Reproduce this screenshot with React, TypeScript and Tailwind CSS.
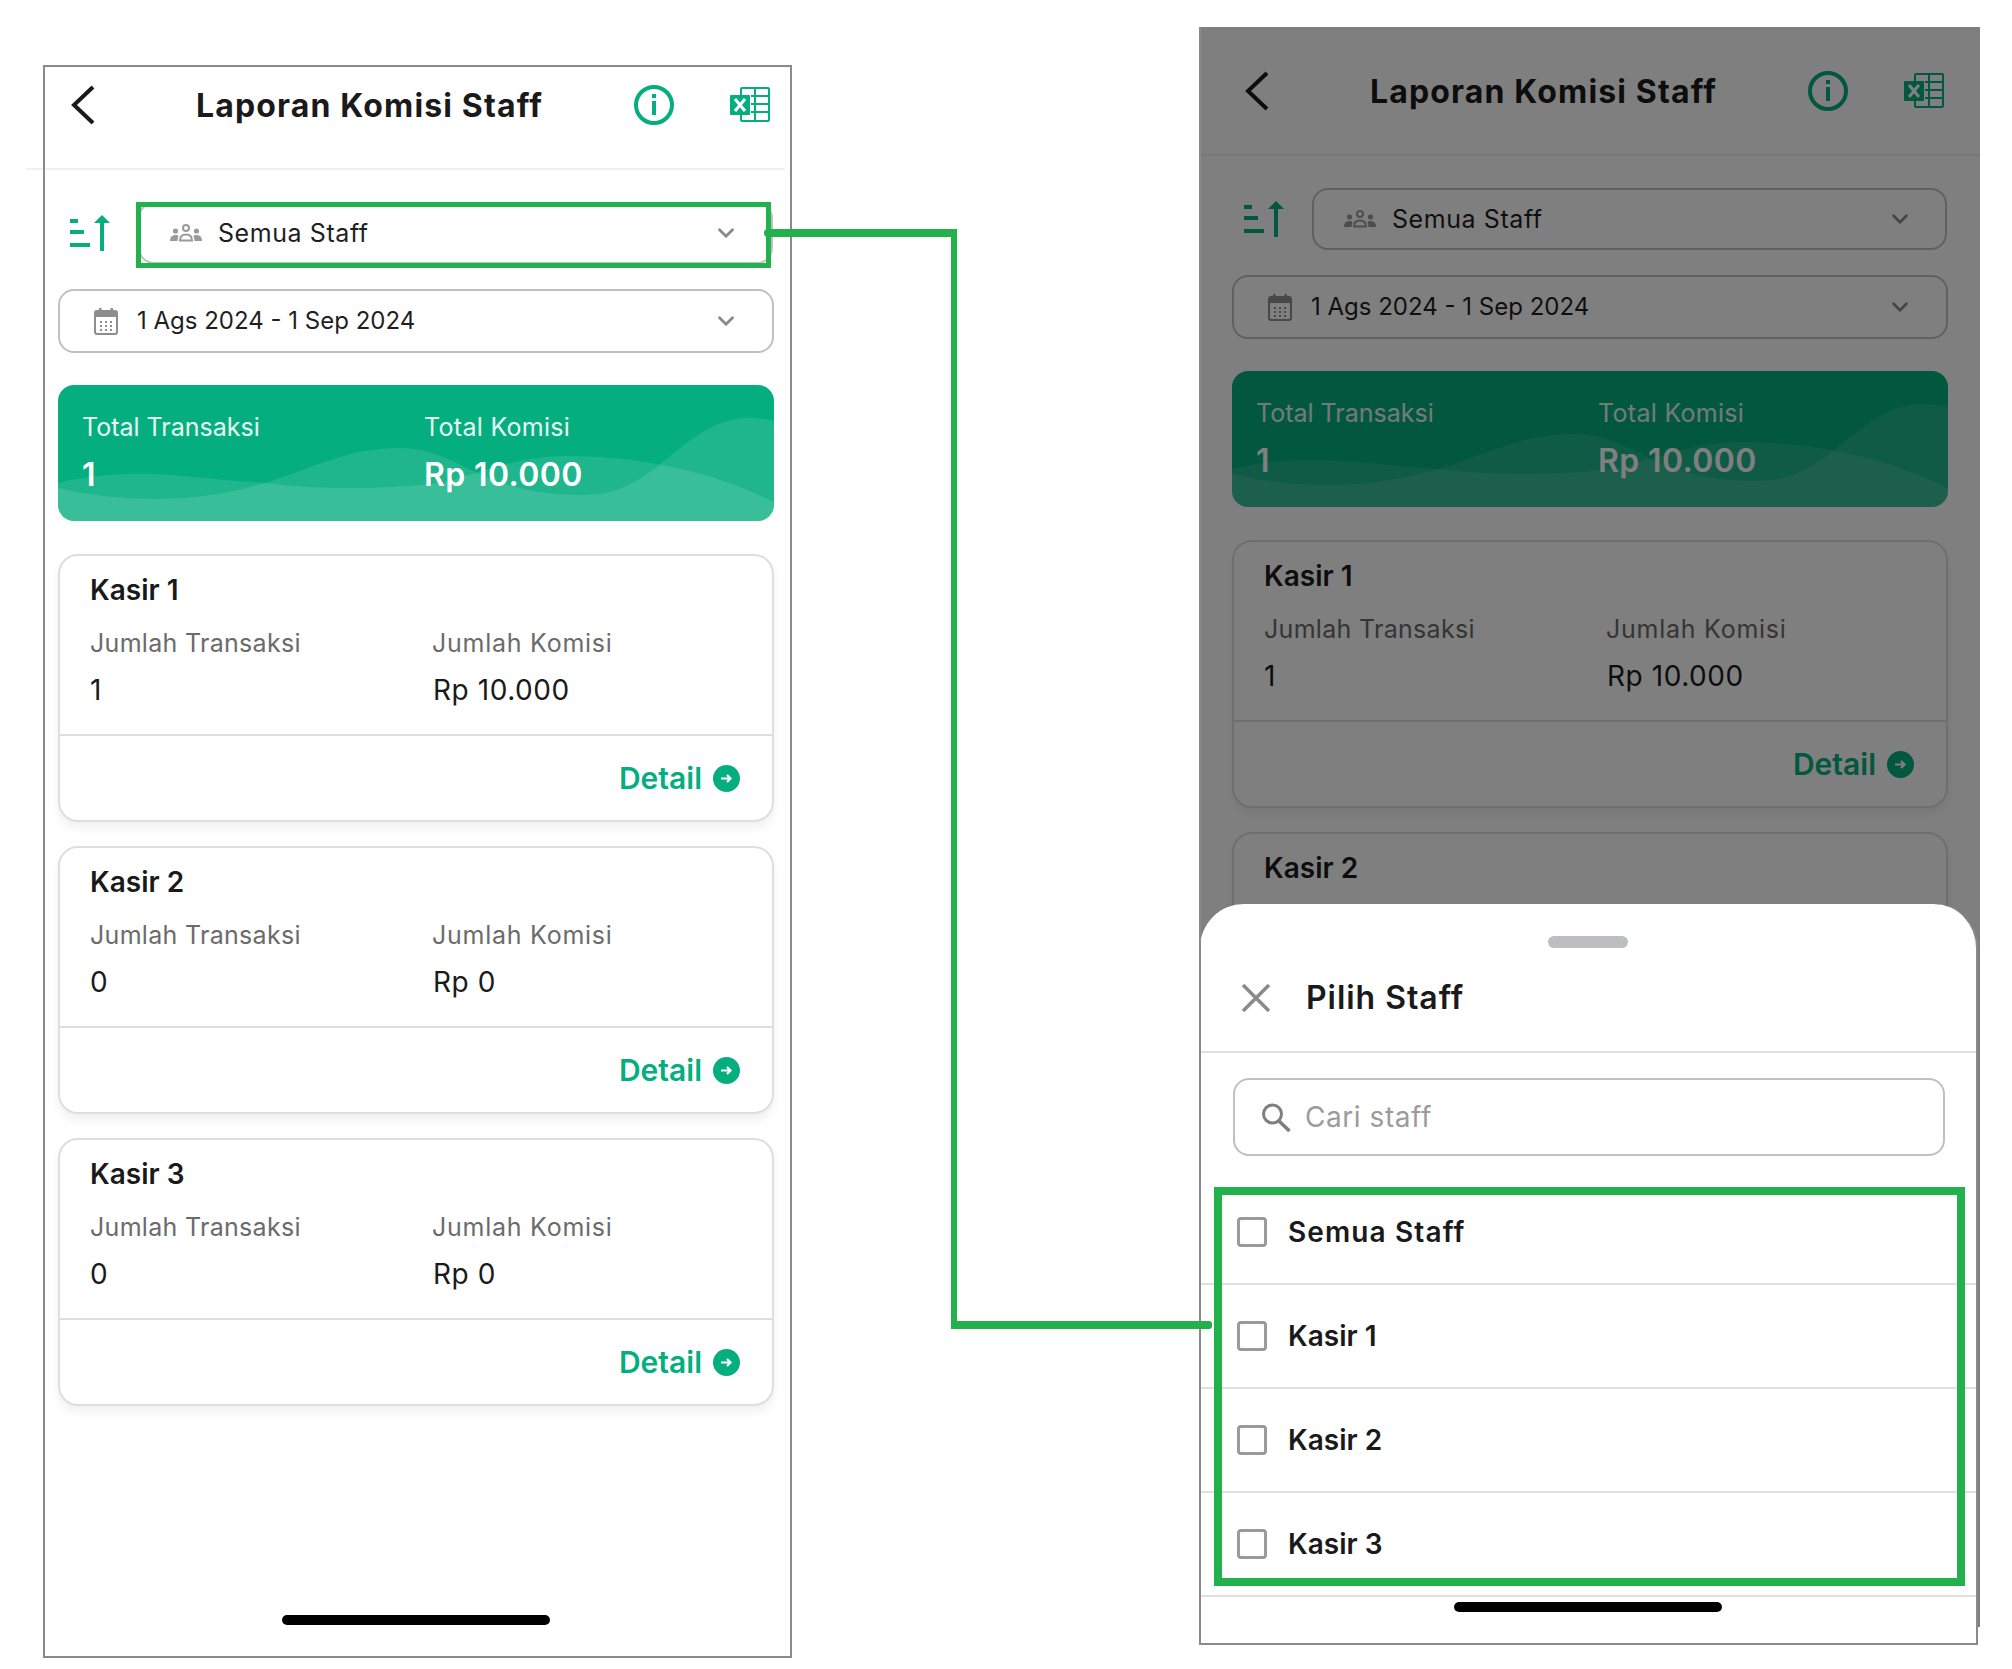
import { ChevronDown } from "lucide-react";

const GREEN = "#05ae7f";

const SortIcon = () => (
  <svg width="40" height="36" viewBox="0 0 40 36" fill="none">
    <rect x="0" y="4" width="8" height="4" fill={GREEN} />
    <rect x="0" y="15" width="14" height="4" fill={GREEN} />
    <rect x="0" y="28" width="20" height="4" fill={GREEN} />
    <path d="M32 0 L40 8 L24 8 Z" fill={GREEN} />
    <rect x="30" y="7" width="4" height="29" fill={GREEN} />
  </svg>
);

const InfoIcon = () => (
  <svg width="40" height="40" viewBox="0 0 40 40" fill="none">
    <circle cx="20" cy="20" r="18" stroke={GREEN} strokeWidth="4" />
    <rect x="18" y="9" width="4" height="4" fill={GREEN} />
    <rect x="18" y="16" width="4" height="14" fill={GREEN} />
  </svg>
);

const ExcelIcon = () => (
  <svg width="40" height="35" viewBox="0 0 40 35" fill="none">
    <rect x="11" y="1" width="28" height="33" rx="1" stroke={GREEN} strokeWidth="2" />
    <path d="M25 1V34M21 9H39M21 17H39M21 25H39" stroke={GREEN} strokeWidth="2" />
    <rect x="0" y="8" width="20" height="20" rx="1" fill={GREEN} />
    <path d="M5 12L15 24M15 12L5 24" stroke="#fff" strokeWidth="3" />
  </svg>
);

const BackIcon = () => (
  <svg width="24" height="40" viewBox="0 0 24 40" fill="none">
    <path d="M22 2L3 20L22 38" stroke="#1a1a1a" strokeWidth="4" />
  </svg>
);

const PeopleIcon = () => (
  <svg width="32" height="18" viewBox="0 0 32 18" fill="#9a9a9a">
    <circle cx="16" cy="4" r="3" fill="none" stroke="#9a9a9a" strokeWidth="2" />
    <circle cx="5.5" cy="7" r="2.6" />
    <circle cx="26.5" cy="7" r="2.6" />
    <path d="M0 17C0 13 2 11 6 11C7 11 8 11.4 8.5 12C8 13.5 7.6 15 7.6 17Z" />
    <path d="M32 17C32 13 30 11 26 11C25 11 24 11.4 23.5 12C24 13.5 24.4 15 24.4 17Z" />
    <path d="M10 16.5C10 12.5 12 10.5 16 10.5C20 10.5 22 12.5 22 16.5Z" fill="none" stroke="#9a9a9a" strokeWidth="2" />
  </svg>
);

const CalendarIcon = () => (
  <svg width="24" height="27" viewBox="0 0 24 27" fill="none">
    <rect x="1" y="3" width="22" height="23" rx="2" stroke="#8e8e8e" strokeWidth="2" />
    <rect x="1" y="3" width="22" height="6" fill="#8e8e8e" />
    <rect x="5" y="0" width="2.5" height="5" fill="#8e8e8e" />
    <rect x="16.5" y="0" width="2.5" height="5" fill="#8e8e8e" />
    <path d="M6 14H8M11 14H13M16 14H18M6 18H8M11 18H13M16 18H18M6 22H8M11 22H13M16 22H18" stroke="#8e8e8e" strokeWidth="2" />
  </svg>
);

const CloseIcon = () => (
  <svg width="30" height="30" viewBox="0 0 30 30" fill="none">
    <path d="M2 2L28 28M28 2L2 28" stroke="#8a8a8a" strokeWidth="3.5" />
  </svg>
);

const SearchIcon = () => (
  <svg width="30" height="29" viewBox="0 0 30 29" fill="none">
    <circle cx="11.5" cy="11" r="9" stroke="#7f7f7f" strokeWidth="3" />
    <path d="M18 18L28.5 28" stroke="#7f7f7f" strokeWidth="3.6" />
  </svg>
);

const DetailArrow = () => (
  <span className="flex h-[27px] w-[27px] items-center justify-center rounded-full bg-[#05ae7f]">
    <svg width="13" height="13" viewBox="0 0 13 13" fill="none">
      <path d="M1 6.5H10M7 3L10.5 6.5L7 10" stroke="#fff" strokeWidth="2.2" />
    </svg>
  </span>
);

const Wave = () => (
  <svg className="absolute inset-0 h-full w-full" viewBox="0 0 716 136" preserveAspectRatio="none">
    <path
      d="M0 98C28 91 55 89 82 89C125 89 165 96 207 98C238 102 265 103 293 103C325 103 358 101 389 97C425 86 465 71 508 71C575 71 650 84 716 117V136H0Z"
      fill="#fff"
      fillOpacity="0.11"
    />
    <path
      d="M0 103C32 110 62 114 97 114C140 114 175 107 207 98C255 83 290 63 341 63C372 63 392 75 413 85C445 101 480 110 523 110C555 110 575 100 599 82C628 58 655 33 690 33C700 33 708 34 716 36V136H0Z"
      fill="#fff"
      fillOpacity="0.11"
    />
  </svg>
);

const StaffCard = ({ name, count, amount, covered }: { name: string; count: string; amount: string; covered?: boolean }) => (
  <div className="h-[268px] w-[716px] rounded-[20px] border-2 border-[#dedede] bg-white shadow-[0_6px_10px_rgba(0,0,0,0.06)]">
    <div className="h-[180px] border-b-2 border-[#dedede] pl-[30px] pt-[16px]">
      <div className="h-[36px] text-[28px] leading-[36px] font-semibold text-[#1a1a1a]">{name}</div>
      {!covered && (
        <>
          <div className="mt-[20px] flex h-[30px] text-[25px] leading-[30px] text-[#6b6b6b]">
            <span className="w-[342px] tracking-[0.012em]">Jumlah Transaksi</span>
            <span className="tracking-[0.03em]">Jumlah Komisi</span>
          </div>
          <div className="mt-[16px] flex h-[32px] text-[28px] leading-[32px] tracking-[0.02em] text-[#1a1a1a]">
            <span className="w-[343px]">{count}</span>
            <span>{amount}</span>
          </div>
        </>
      )}
    </div>
    {!covered && (
      <div className="flex h-[84px] items-center justify-end gap-[11px] pr-[32px]">
        <span className="text-[30px] font-semibold text-[#05ae7f]">Detail</span>
        <DetailArrow />
      </div>
    )}
  </div>
);

const Screen = ({ dimmed }: { dimmed?: boolean }) => (
  <div className="relative w-[759px]">
    <header className="flex h-[129px] items-center border-b-2 border-[#f0f0f0] pl-[45px] pr-[15px]">
      <BackIcon />
      <h1 className="ml-[101px] pt-[2px] text-[32px] font-bold tracking-[0.036em] text-[#1a1a1a]">Laporan Komisi Staff</h1>
      <div className="ml-auto flex items-center gap-[56px]">
        <InfoIcon />
        <ExcelIcon />
      </div>
    </header>
    {dimmed && <div className="absolute left-0 top-[127px] h-[2px] w-[781px] bg-[#f0f0f0]" />}
    <div className="flex w-[748px] flex-col pl-[32px] pt-[32px]">
      <div className="flex h-[62px] items-center">
        <div className="ml-[12px] w-[68px]">
          <SortIcon />
        </div>
        <div className="flex h-[62px] w-[635px] items-center rounded-[16px] border-2 border-[#c0c0c0] bg-white pl-[30px] pr-[32px]">
          <PeopleIcon />
          <span className="ml-[16px] pt-[1px] text-[25px] tracking-[0.023em] text-[#1f1f1f]">Semua Staff</span>
          <ChevronDown className="ml-auto h-[26px] w-[26px] text-[#8a8a8a]" strokeWidth={2.6} />
        </div>
      </div>
      <div className="mt-[25px] flex h-[64px] w-[716px] items-center rounded-[16px] border-2 border-[#c0c0c0] pl-[34px] pr-[33px]">
        <CalendarIcon />
        <span className="ml-[19px] text-[24px] text-[#1f1f1f]">1 Ags 2024 - 1 Sep 2024</span>
        <ChevronDown className="ml-auto h-[26px] w-[26px] text-[#8a8a8a]" strokeWidth={2.6} />
      </div>
      <div className="relative mt-[32px] h-[136px] w-[716px] overflow-hidden rounded-[16px] bg-[#05ae7f] text-white">
        <Wave />
        <div className="relative flex flex-col pl-[24px] pt-[27px]">
          <div className="flex h-[30px] text-[25px] leading-[30px] text-white/90">
            <span className="w-[342px]">Total Transaksi</span>
            <span className="tracking-[0.012em]">Total Komisi</span>
          </div>
          <div className="mt-[15px] flex h-[36px] text-[32px] leading-[36px] font-semibold tracking-[0.012em]">
            <span className="w-[342px]">1</span>
            <span>Rp 10.000</span>
          </div>
        </div>
      </div>
      <div className="mt-[33px] flex flex-col gap-[24px]">
        <StaffCard name="Kasir 1" count="1" amount="Rp 10.000" />
        <StaffCard name="Kasir 2" count="0" amount="Rp 0" covered={dimmed} />
        {!dimmed && <StaffCard name="Kasir 3" count="0" amount="Rp 0" />}
      </div>
    </div>
  </div>
);

const SheetRow = ({ label, wide }: { label: string; wide?: boolean }) => (
  <div className="flex h-[104px] items-center gap-[21px] border-b-2 border-[#e0e0e0] pl-[37px]">
    <span className="h-[30px] w-[30px] rounded-[4px] border-[3px] border-[#9a9a9a]" />
    <span className={wide ? "text-[28px] font-semibold tracking-[0.04em] text-[#1a1a1a]" : "text-[28px] font-semibold text-[#1a1a1a]"}>{label}</span>
  </div>
);

const Sheet = () => (
  <div className="absolute bottom-0 left-[-1px] flex h-[741px] w-[778px] flex-col rounded-t-[44px] border-b-2 border-r-2 border-[#8a8a8a] bg-white">
    <div className="mx-auto mt-[32px] h-[12px] w-[80px] rounded-full bg-[#bcbec0]" />
    <div className="mt-[31px] flex h-[37px] items-center pl-[41px]">
      <CloseIcon />
      <span className="ml-[35px] text-[32px] font-semibold tracking-[0.03em] text-[#1a1a1a]">Pilih Staff</span>
    </div>
    <div className="mt-[35px] border-b-2 border-[#e0e0e0]" />
    <div className="ml-[33px] mt-[25px] flex h-[78px] w-[712px] items-center rounded-[16px] border-2 border-[#c0c0c0] pl-[26px]">
      <SearchIcon />
      <span className="ml-[14px] text-[28px] tracking-[0.02em] text-[#9b9b9b]">Cari staff</span>
    </div>
    <div className="mt-[25px]">
      <SheetRow label="Semua Staff" wide />
      <SheetRow label="Kasir 1" />
      <SheetRow label="Kasir 2" />
      <SheetRow label="Kasir 3" />
    </div>
    <div className="mx-auto mt-[5px] h-[10px] w-[268px] rounded-full bg-black" />
  </div>
);

export default function App() {
  return (
    <div className="relative h-[1669px] w-[2012px] overflow-hidden bg-white font-['Inter',sans-serif]">
      {/* left phone */}
      <div className="absolute left-[26px] top-[41px]">
        <Screen />
      </div>
      <div className="absolute left-[43px] top-[65px] h-[1593px] w-[749px] border-2 border-[#8a8a8a]" />
      <div className="absolute left-[282px] top-[1615px] h-[10px] w-[268px] rounded-full bg-black" />
      <div className="absolute left-[136px] top-[202px] h-[66px] w-[635px] border-[5px] border-[#22b14c]" />

      {/* right phone */}
      <div className="absolute left-[1199px] top-[27px] h-[1618px] w-[781px] overflow-hidden border-l-2 border-[#8a8a8a] bg-white">
        <div className="-ml-[1px]">
          <Screen dimmed />
        </div>
        <div className="absolute inset-x-0 top-0 h-[1600px] bg-black/50" />
        <Sheet />
      </div>
      <div className="absolute left-[1214px] top-[1187px] h-[399px] w-[751px] border-[8px] border-[#22b14c]" />

      {/* connector */}
      <div className="absolute left-[764px] top-[229px] h-[8px] w-[193px] rounded-l-full bg-[#22b14c]" />
      <div className="absolute left-[951px] top-[229px] h-[1100px] w-[6px] bg-[#22b14c]" />
      <div className="absolute left-[951px] top-[1321px] h-[8px] w-[261px] rounded-r-[3px] bg-[#22b14c]" />
    </div>
  );
}
